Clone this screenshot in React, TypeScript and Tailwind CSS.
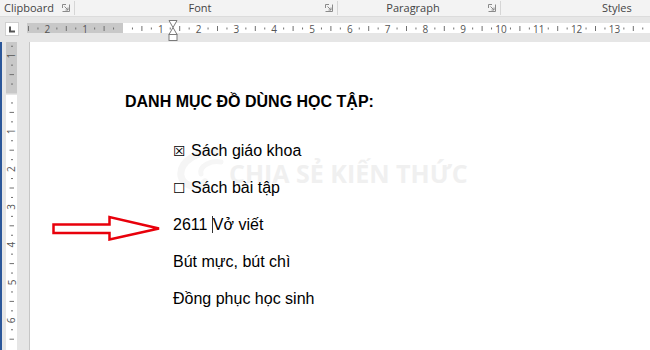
const CM = 37.8;

function Launcher() {
  return (
    <svg width="8" height="8" viewBox="0 0 8 8" className="shrink-0">
      <path d="M0.5 4 V0.5 H4" fill="none" stroke="#8a8a8a" />
      <path d="M0.5 7.5 H7.5 V0.5" fill="none" stroke="#8a8a8a" />
      <path d="M2.5 2.5 L6 6 M3.5 6 H6 V3.5" fill="none" stroke="#8a8a8a" />
    </svg>
  );
}

function RibbonLabels() {
  return (
    <div className="flex h-[17px] bg-[#f3f3f3] border-b border-[#dcdcdc] text-[11px] leading-[16px] text-[#444] font-['Open_Sans',sans-serif]">
      <div className="w-[75px] flex items-center pl-[4px] pr-[4px] border-r border-[#d6d6d6] my-[1px]">
        <span>Clipboard</span>
        <span className="ml-auto"><Launcher /></span>
      </div>
      <div className="w-[263px] flex items-center pr-[4px] border-r border-[#d6d6d6] my-[1px]">
        <span className="flex-1 text-center">Font</span>
        <Launcher />
      </div>
      <div className="w-[163px] flex items-center pr-[4px] border-r border-[#d6d6d6] my-[1px]">
        <span className="flex-1 text-center">Paragraph</span>
        <Launcher />
      </div>
      <div className="flex-1 flex items-center pl-[101px]">
        <span>Styles</span>
      </div>
    </div>
  );
}

function HRuler() {
  const zero = 123;
  const marks = [];
  for (let q = -10; q <= 56; q++) {
    const v = q / 4;
    const x = zero + v * CM;
    if (x < 28 || x > 649) continue;
    if (q === 0) continue;
    if (q % 4 === 0) {
      marks.push(
        <text key={q} x={x} y={11.5} textAnchor="middle" dominantBaseline="central" fontSize={10} fill="#555">
          {Math.abs(v)}
        </text>
      );
    } else if (q % 2 === 0) {
      marks.push(<line key={q} x1={x} x2={x} y1={9} y2={14} stroke="#707070" />);
    } else {
      marks.push(<rect key={q} x={x - 0.5} y={10.5} width={1} height={2} fill="#707070" />);
    }
  }
  return (
    <svg width="650" height="25" className="block bg-[#e6e6e6] font-['Open_Sans',sans-serif]">
      {/* tab selector */}
      <rect x="5.5" y="5.5" width="13" height="13" fill="#fff" stroke="#d0d0d0" />
      <path d="M10 9.5 V14.5 H15" fill="none" stroke="#555" strokeWidth="2" />
      {/* ruler strip */}
      <rect x="27" y="6" width="96" height="10" fill="#c8c8c8" />
      <rect x="123" y="6" width="527" height="10" fill="#fff" />
      {marks}
      {/* indent markers */}
      <path d="M169 3.5 H177 L173 10.5 Z" fill="#fff" stroke="#7a7a7a" />
      <path d="M173 10.5 L169 17.5 H177 Z" fill="#fff" stroke="#7a7a7a" />
      <rect x="169" y="17.5" width="8" height="6" fill="#fff" stroke="#7a7a7a" />
    </svg>
  );
}

function VRuler() {
  const zero = 51.5;
  const marks = [];
  for (let q = -6; q <= 28; q++) {
    const v = q / 4;
    const y = zero + v * CM;
    if (y < 1 || y > 300) continue;
    if (q === 0) continue;
    if (q % 4 === 0) {
      marks.push(
        <text
          key={q}
          x={5.5}
          y={y}
          textAnchor="middle"
          dominantBaseline="central"
          fontSize={10}
          fill="#555"
          transform={`rotate(-90 5.5 ${y})`}
        >
          {Math.abs(v)}
        </text>
      );
    } else if (q % 2 === 0) {
      marks.push(<line key={q} x1={3.5} x2={8} y1={y} y2={y} stroke="#707070" />);
    } else {
      marks.push(<rect key={q} x={5} y={y - 0.5} width={2} height={1} fill="#707070" />);
    }
  }
  return (
    <svg width="11" height="308" className="block shrink-0 font-['Open_Sans',sans-serif]">
      <rect x="0" y="0" width="11" height="51.5" fill="#c8c8c8" />
      <rect x="0" y="53" width="11" height="255" fill="#fff" />
      {marks}
    </svg>
  );
}

function Arrow() {
  return (
    <svg width="110" height="26" viewBox="0 0 110 26" className="absolute left-[-121px] top-0">
      <path
        d="M1.5 9.5 H57.5 V2 L107 13.5 L57.5 24.5 V18 H1.5 Z"
        fill="#fff"
        stroke="#e8000b"
        strokeWidth="2.5"
        strokeLinejoin="miter"
      />
    </svg>
  );
}

function Watermark() {
  return (
    <div className="absolute left-[141px] top-[106px] flex items-start gap-[2px] pointer-events-none">
      <svg width="56" height="46" viewBox="0 0 56 46">
        <path d="M46 4 C 26 2, 8 14, 10 28 C 12 38, 26 42, 34 34" fill="none" stroke="#f5f5f5" strokeWidth="7" strokeLinecap="round" />
        <path d="M50 14 C 40 12, 28 18, 30 26" fill="none" stroke="#f6f6f6" strokeWidth="5" strokeLinecap="round" />
      </svg>
      <span className="mt-[13px] text-[25px] leading-[24px] font-bold text-[#f0f0f0] font-['Open_Sans',sans-serif] whitespace-nowrap">
        CHIA SẺ KIẾN THỨC
      </span>
    </div>
  );
}

function Page() {
  const rowClass = "relative h-[20px] leading-[20px] whitespace-nowrap";
  return (
    <div className="relative flex-1 bg-white border-l border-[#c6c6c6] pt-[50px] pl-[95px] text-[16px] text-black font-['Liberation_Sans',sans-serif]">
      <Watermark />
      <div className="relative">
        <h1 className="font-bold leading-[20px] whitespace-nowrap">DANH MỤC ĐỒ DÙNG HỌC TẬP:</h1>
        <div className="mt-[29px] ml-[48px] flex flex-col gap-[17px]">
          <div className={rowClass}>
            <span className="inline-block w-[18px] text-[14px] font-['DejaVu_Sans',sans-serif]">☒</span>Sách giáo khoa
          </div>
          <div className={rowClass}>
            <span className="inline-block w-[18px] text-[14px] font-['DejaVu_Sans',sans-serif]">☐</span>Sách bài tập
          </div>
          <div className={rowClass}>
            <Arrow />
            2611 <span className="inline-block w-px h-[17px] bg-[#333] align-[-3px]" />Vở viết
          </div>
          <div className={rowClass}>Bút mực, bút chì</div>
          <div className={rowClass}>Đồng phục học sinh</div>
        </div>
      </div>
    </div>
  );
}

export default function App() {
  return (
    <div className="w-[650px] h-[350px] overflow-hidden flex flex-col bg-[#e6e6e6]">
      <RibbonLabels />
      <HRuler />
      <div className="flex flex-1 min-h-0">
        <div className="w-[2px] bg-[#2b579a]" />
        <div className="w-[4px]" />
        <VRuler />
        <div className="w-[12px]" />
        <Page />
      </div>
    </div>
  );
}
